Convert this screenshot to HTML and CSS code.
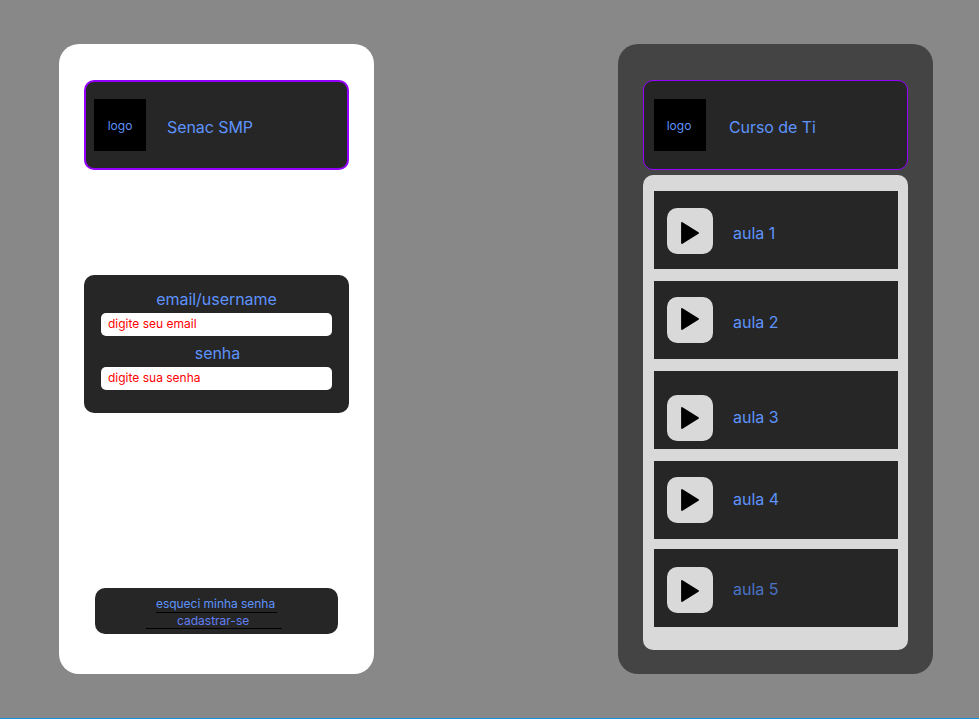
FILE: index.html
```html
<!DOCTYPE html>
<html lang="pt-BR">
<head>
<meta charset="utf-8">
<title>Senac SMP</title>
<link rel="stylesheet" href="styles.css">
</head>
<body>
<main class="board">
  <section class="phone login">
    <header class="header">
      <div class="logo">logo</div>
      <h1 class="title">Senac SMP</h1>
    </header>
    <form class="form">
      <label class="label" for="email">email/username</label>
      <div class="field" id="email">digite seu email</div>
      <label class="label label-password" for="senha">senha</label>
      <div class="field" id="senha">digite sua senha</div>
    </form>
    <nav class="links">
      <a class="link forgot">esqueci minha senha</a>
      <a class="link signup">cadastrar-se</a>
    </nav>
  </section>
  <section class="phone course">
    <header class="header">
      <div class="logo">logo</div>
      <h1 class="title">Curso de Ti</h1>
    </header>
    <div class="lessons">
      <article class="lesson first">
        <div class="play"><svg viewBox="0 0 18 22"><path d="M1 1 17 11 1 21Z"/></svg></div>
        <span class="name">aula 1</span>
      </article>
      <article class="lesson second">
        <div class="play"><svg viewBox="0 0 18 22"><path d="M1 1 17 11 1 21Z"/></svg></div>
        <span class="name">aula 2</span>
      </article>
      <article class="lesson third">
        <div class="play"><svg viewBox="0 0 18 22"><path d="M1 1 17 11 1 21Z"/></svg></div>
        <span class="name">aula 3</span>
      </article>
      <article class="lesson fourth">
        <div class="play"><svg viewBox="0 0 18 22"><path d="M1 1 17 11 1 21Z"/></svg></div>
        <span class="name">aula 4</span>
      </article>
      <article class="lesson fifth">
        <div class="play"><svg viewBox="0 0 18 22"><path d="M1 1 17 11 1 21Z"/></svg></div>
        <span class="name">aula 5</span>
      </article>
    </div>
  </section>
</main>
</body>
</html>
```
FILE: styles.css
```css
* { box-sizing: border-box; }

body {
  margin: 0;
  background: #888;
  color: #5e93fb;
  font: 400 16px/20px Inter, sans-serif;
}

.board {
  display: flex;
  justify-content: space-between;
  align-items: flex-start;
  height: 719px;
  padding: 44px 46px 0 59px;
  border-bottom: 1px solid #168fe3;
}

.phone {
  display: flex;
  flex-direction: column;
  width: 315px;
  height: 630px;
  padding: 36px 25px 0;
  border-radius: 20px;
}

.login { background: #fff; }
.course { background: #444; }

.header {
  display: flex;
  align-items: flex-start;
  flex: none;
  height: 90px;
  padding: 17px 8px;
  background: #262626;
  border: 2px solid #9500ff;
  border-radius: 10px;
}

.course .header {
  padding: 18px 10px;
  border: 1px solid #9500ff;
}

.logo {
  width: 52px;
  height: 52px;
  padding-top: 19px;
  background: #000;
  font-size: 12px;
  line-height: 16px;
  text-align: center;
}

.course .logo { padding-right: 2px; }

.title {
  margin: 18px 0 0 21px;
  font-size: 16px;
  font-weight: inherit;
  letter-spacing: -0.07px;
}

.course .title { margin-left: 23px; }

.form {
  display: flex;
  flex-direction: column;
  height: 138px;
  margin-top: 105px;
  padding: 14px 17px 0;
  background: #262626;
  border-radius: 10px;
}

.label {
  margin-bottom: 4px;
  letter-spacing: -0.05px;
  text-align: center;
}

.label-password {
  margin-top: 7px;
  padding-left: 2px;
}

.field {
  height: 23px;
  padding: 3px 7px;
  background: #fff;
  border-radius: 5px;
  color: #f00;
  font-size: 12px;
  line-height: 16px;
}

.links {
  display: flex;
  flex-direction: column;
  width: 243px;
  height: 46px;
  margin: 175px 0 0 11px;
  padding-top: 8px;
  background: #262626;
  border-radius: 10px;
  font-size: 12px;
}

.link {
  border-bottom: 1px solid #000;
  line-height: 16px;
  white-space: nowrap;
}

.forgot {
  width: 121px;
  margin-left: 61px;
  letter-spacing: -0.04px;
}

.signup {
  width: 136px;
  height: 16px;
  margin-left: 51px;
  padding-left: 31px;
  color: #617ff3;
}

.lessons {
  height: 475px;
  margin-top: 5px;
  padding: 16px 10px 0 11px;
  background: #d9d9d9;
  border-radius: 10px;
}

.lesson {
  display: flex;
  align-items: flex-start;
  height: 78px;
  margin-bottom: 12px;
  padding-left: 13px;
  background: #262626;
}

.play {
  display: flex;
  justify-content: center;
  width: 46px;
  height: 46px;
  padding-top: 12px;
  background: #d9d9d9;
  border-radius: 10px;
}

.play svg {
  width: 18px;
  height: 22px;
  fill: #000;
  stroke: #000;
  stroke-width: 1.8;
  stroke-linejoin: round;
}

.name { margin: 15px 0 0 20px; }

.first { padding-top: 17px; }
.first .play { padding-top: 14px; }

.second { padding-top: 16px; }
.second .play { padding-top: 11px; }

.third { padding-top: 24px; }
.third .name, .fourth .name, .fifth .name { margin-top: 12px; }

.fourth {
  margin-bottom: 10px;
  padding-top: 16px;
}

.fifth { padding-top: 18px; }
.fifth .play { padding-top: 13px; }
.fifth .name { color: #4a73c5; }
```
